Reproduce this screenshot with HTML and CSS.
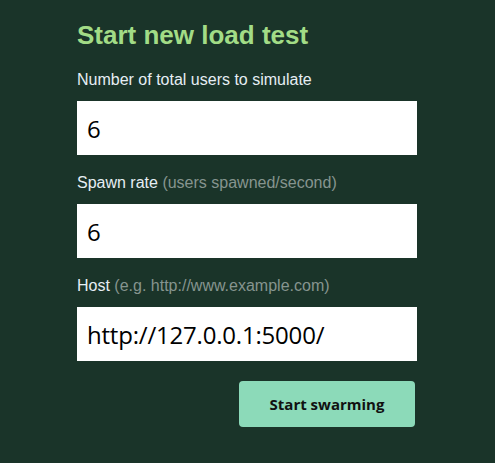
FILE: index.html
```html
<!DOCTYPE html>
<html>
<head>
<meta charset="utf-8">
<link rel="stylesheet" href="styles.css">
</head>
<body>
<div class="start">
  <h2 class="title">Start new load test</h2>
  <form class="form">
    <label class="label">Number of total users to simulate</label>
    <input class="field" type="text" value="6">
    <label class="label">Spawn rate <span class="hint">(users spawned/second)</span></label>
    <input class="field" type="text" value="6">
    <label class="label">Host <span class="hint">(e.g. http://www.example.com)</span></label>
    <input class="field" type="text" value="http://127.0.0.1:5000/">
    <div class="actions"><button class="btn" type="button">Start swarming</button></div>
  </form>
</div>
</body>
</html>
```
FILE: styles.css
```css
html, body {
  margin: 0;
  padding: 0;
  background: #1a3429;
  height: 100%;
}
.start {
  width: 341px;
  margin: 0 auto;
  padding-top: 20px;
  font-family: "Liberation Sans", Arial, sans-serif;
}
.title {
  margin: 0;
  font-size: 26px;
  line-height: 30px;
  font-weight: bold;
  color: #a2dc86;
}
.form {
  display: flex;
  flex-direction: column;
}
.label {
  margin-top: 18px;
  margin-bottom: 11px;
  font-size: 16px;
  line-height: 20px;
  color: #e6eef4;
}
.title + .form .label:first-child {
  margin-top: 20px;
}
.hint {
  color: #86948f;
}
.field {
  box-sizing: border-box;
  width: 340px;
  height: 54px;
  margin: 0;
  border: none;
  outline: none;
  padding: 0 10px;
  background: #fff;
  font-family: "Open Sans", sans-serif;
  font-size: 24px;
  letter-spacing: -0.2px;
  color: #000;
}
.actions {
  display: flex;
  justify-content: flex-end;
  margin-top: 20px;
  padding-right: 3px;
}
.btn {
  width: 176px;
  height: 46px;
  border: none;
  border-radius: 4px;
  background: #8cdab9;
  color: #111;
  font-family: "Open Sans", sans-serif;
  font-weight: bold;
  font-size: 15px;
  cursor: pointer;
}
```
